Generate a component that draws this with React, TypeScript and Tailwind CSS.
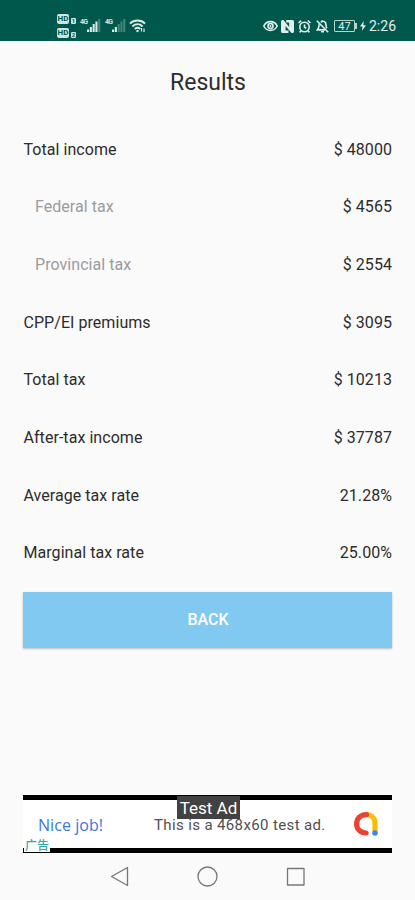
import React from 'react';

interface ResultRow {
  label: string;
  value: string;
  sub?: boolean;
}

const rows: ResultRow[] = [
  { label: 'Total income', value: '$ 48000' },
  { label: 'Federal tax', value: '$ 4565', sub: true },
  { label: 'Provincial tax', value: '$ 2554', sub: true },
  { label: 'CPP/EI premiums', value: '$ 3095' },
  { label: 'Total tax', value: '$ 10213' },
  { label: 'After-tax income', value: '$ 37787' },
  { label: 'Average tax rate', value: '21.28%' },
  { label: 'Marginal tax rate', value: '25.00%' },
];

const HdBadge: React.FC<{ sim: string }> = ({ sim }) => (
  <div className="flex h-[10px] items-center gap-[2px]">
    <span className="flex h-[10px] w-[12px] items-center justify-center rounded-[2px] bg-[#cfe6df] text-[8px] leading-none font-bold text-[#00574b]">
      HD
    </span>
    <span className="mt-[3px] flex h-[6px] w-[5px] items-center justify-center rounded-[1px] bg-[#cfe6df] text-[6px] leading-none font-bold text-[#00574b]">
      {sim}
    </span>
  </div>
);

const Signal: React.FC<{ level: number }> = ({ level }) => (
  <div className="flex h-[13px] items-start">
    <span className="w-[7px] text-[7px] leading-[7px] font-bold tracking-[-0.7px] text-[#cfe6df]">4G</span>
    <svg width="14" height="13" viewBox="0 0 14 13">
      {[2.5, 5, 8, 10.5, 13].map((h, i) => (
        <rect
          key={h}
          x={i * 2.8}
          y={13 - h}
          width="2.1"
          height={h}
          fill="#d9ebe6"
          opacity={i < level ? 1 : 0.3}
        />
      ))}
    </svg>
  </div>
);

const StatusBar: React.FC = () => (
  <div className="flex h-[41px] justify-between bg-[#00574b] pr-[19px] pl-[57px] text-[#e0efeb]">
    <div className="flex pt-[14px]">
      <div className="flex w-[23px] flex-col gap-[4px]">
        <HdBadge sim="1" />
        <HdBadge sim="2" />
      </div>
      <div className="flex gap-[4px] pt-[5px]">
        <Signal level={4} />
        <Signal level={2} />
        <svg className="-ml-[1px]" width="17" height="14" viewBox="0 0 17 14" fill="none" stroke="#dcede8" strokeWidth="2">
          <path d="M1 4.600C5 .6 12 .6 16 4.600" />
          <path d="M3.400 7.400c3-2.800 7.200-2.800 10.200 0" />
          <path d="M5.800 10c1.600-1.400 3.800-1.400 5.400 0" />
          <circle cx="8.500" cy="12" r="1.200" fill="#dcede8" stroke="none" />
          <path d="M12.500 9v3.500M15 13V9.500" strokeWidth="1.200" />
        </svg>
      </div>
    </div>

    <div className="flex h-[52px] items-center">
      <svg className="mr-[3px]" width="15" height="12" viewBox="0 0 15 12" fill="none" stroke="currentColor" strokeWidth="1.6">
        <path d="M.8 6C3.4.2 11.6.2 14.200 6 11.600 11.800 3.400 11.800.8 6Z" />
        <circle cx="7.500" cy="6" r="2.500" />
        <circle cx="7.500" cy="6" r="1" fill="currentColor" stroke="none" />
      </svg>
      <svg className="mr-[4px]" width="13" height="13" viewBox="0 0 13 13">
        <path d="M0 1.500Q0 0 1.500 0H2.500L8.200 7V2.600H5.200V0H11.500Q13 0 13 1.500V11.500Q13 13 11.500 13H10.500L4.600 6V10.500H7.500V13H1.500Q0 13 0 11.500Z" fill="currentColor" />
      </svg>
      <svg className="mr-[5px]" width="13" height="13" viewBox="0 0 13 13" fill="none" stroke="currentColor" strokeWidth="1.6">
        <circle cx="6.500" cy="7" r="4.700" />
        <path d="M6.500 4.400V7.200L8.300 8.400M.5 3 3.200.7M12.500 3 9.800.7M3 10.800l-1.400 1.600M10 10.800l1.400 1.600" />
      </svg>
      <svg className="mr-[5px]" width="13" height="13" viewBox="0 0 13 13" fill="none" stroke="currentColor" strokeWidth="1.6">
        <path d="M3.300 4.200C2.800 5.600 3.100 8 1.400 9.900H9M4.800 2.400C7-.1 10 1.800 10 4.800c0 1.700.2 2.600.8 3.600M6.200 1.600V.2M5 11.800h3" />
        <path d="m.8.8 11.400 11.400" />
      </svg>
      <div className="mr-[3px] flex items-center">
        <span className="flex h-[12px] w-[21px] items-center justify-center rounded-[1px] border border-[#b7d6cd] text-[11px] leading-none">
          47
        </span>
        <span className="h-[6px] w-[2px] bg-[#b7d6cd]" />
      </div>
      <svg className="mr-[3px]" width="6" height="10" viewBox="0 0 6 10" fill="currentColor">
        <path d="M3.800 0 0 5.400h2.500L1.900 10 6 4.200H3.300Z" />
      </svg>
      <span className="text-[14px] leading-none">2:26</span>
    </div>
  </div>
);

const AdBanner: React.FC = () => (
  <div className="relative mx-[23px] h-[58px] border-y-[5px] border-black bg-white">
    <div className="flex h-full items-center pt-[2px] pr-[13px] pl-[15px] font-['Open_Sans',sans-serif] text-[15px] leading-[12px]">
      <span className="w-[116px] text-[16px] tracking-[0.05px] text-[#3b78e0]">Nice job!</span>
      <span className="flex-1 whitespace-nowrap font-['Roboto',sans-serif] tracking-[0.37px] text-[#505050]">
        This is a 468x60 test ad.
      </span>
      <svg className="-mt-[2px]" width="26" height="26" viewBox="0 0 26 26" fill="none" strokeWidth="5.2">
        <path d="M13 3.500C18.500 3.500 22 7.500 22 12.500V20" stroke="#fbbc04" />
        <path d="M13.500 3.600C7.500 3.600 3.600 7.500 3.600 13c0 5.300 4 9 9.400 9" stroke="#ea4335" strokeLinecap="round" />
        <circle cx="22" cy="22" r="2.800" fill="#4285f4" />
      </svg>
    </div>
    <span className="absolute top-[-4px] left-[154px] flex h-[23px] w-[63px] items-center justify-center bg-[#424242] pt-[1px] font-['Roboto',sans-serif] text-[17px] leading-[13px] whitespace-nowrap text-white">
      Test Ad
    </span>
    <span className="absolute bottom-[-4px] left-[1px] flex h-[14px] w-[26px] items-center justify-center bg-white font-['Noto_Sans_CJK_SC',sans-serif] text-[12px] leading-none font-medium text-[#38aaa5]">
      广告
    </span>
  </div>
);

const NavBar: React.FC = () => (
  <div className="flex h-[47px] items-center justify-center gap-[67px]">
    <svg width="21" height="21" viewBox="0 0 21 21" fill="none" stroke="#777" strokeWidth="1.3" strokeLinejoin="round">
      <path d="M18.500 1.500v18L2.500 10.500Z" />
    </svg>
    <svg width="21" height="21" viewBox="0 0 21 21" fill="none" stroke="#777" strokeWidth="1.3">
      <circle cx="10.500" cy="10.500" r="9.500" />
    </svg>
    <svg width="21" height="21" viewBox="0 0 21 21" fill="none" stroke="#777" strokeWidth="1.3" strokeLinejoin="round">
      <path d="M2.500 2.500h16.500v16.500H2.500Z" />
    </svg>
  </div>
);

const App: React.FC = () => {
  return (
    <div className="flex h-[900px] w-[415px] flex-col overflow-hidden bg-[#fbfafa] font-['Roboto',sans-serif] text-[#2c2c2c]">
      <StatusBar />

      <main className="flex flex-1 flex-col px-[23px]">
        <h1 className="mt-[24px] h-[55.700px] pl-[1px] text-center text-[23px] leading-[36px]">Results</h1>

        <div className="flex flex-col pl-[0.5px] text-[16px] tracking-[0.05px]">
          {rows.map((row) => (
            <div key={row.label} className="flex h-[57.700px] items-center justify-between">
              <span className={row.sub ? 'pl-[11.500px] text-[#9b9b9f]' : ''}>{row.label}</span>
              <span>{row.value}</span>
            </div>
          ))}
        </div>

        <button className="mt-[10px] h-[56px] w-full bg-[#81c9f1] pl-[1px] text-[16px] font-medium text-white shadow-[0_1px_2px_rgba(0,0,0,0.25)]">
          BACK
        </button>
      </main>

      <AdBanner />
      <NavBar />
    </div>
  );
};

export default App;
